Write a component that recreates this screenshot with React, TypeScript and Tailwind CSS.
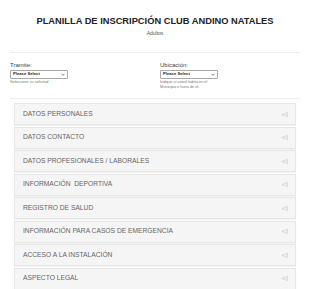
const sections = [
  'DATOS PERSONALES',
  'DATOS CONTACTO',
  'DATOS PROFESIONALES / LABORALES',
  'INFORMACIÓN  DEPORTIVA',
  'REGISTRO DE SALUD',
  'INFORMACIÓN PARA CASOS DE EMERGENCIA',
  'ACCESO A LA INSTALACIÓN',
  'ASPECTO LEGAL',
];

function FakeSelect() {
  return (
    <div className="flex items-center justify-between w-[58px] h-[9px] border border-[#a9a9a9] rounded-[1px] bg-white px-[2px]">
      <span className="text-[4.2px] font-bold text-[#222] leading-none">Please Select</span>
      <svg viewBox="0 0 10 6" className="w-[4px] h-[3px]">
        <path d="M1 1l4 4 4-4" fill="none" stroke="#333" strokeWidth="1.6" />
      </svg>
    </div>
  );
}

function Arrow() {
  return (
    <svg viewBox="0 0 8 6" className="w-[7px] h-[5px]">
      <path d="M7.5 0.5L0.8 3L7.5 5.5Z" fill="#f0f0f0" stroke="#c8c8c8" strokeWidth="0.7" strokeLinejoin="round" />
    </svg>
  );
}

export default function App() {
  return (
    <div className="w-[310px] h-[289px] bg-white overflow-hidden" style={{ fontFamily: '"Liberation Sans", Arial, sans-serif' }}>
      {/* Header */}
      <div className="pt-[15px] text-center">
        <h1 className="text-[9.3px] font-bold text-[#222] leading-[12px]">PLANILLA DE INSCRIPCIÓN CLUB ANDINO NATALES</h1>
        <p className="mt-[3px] text-[5px] text-[#555] leading-[6px]">Adultos</p>
      </div>

      <div className="mx-[10px] mt-[16px] border-t border-[#eeeeee]"></div>

      {/* Selects */}
      <div className="grid grid-cols-2 gap-[10px] px-[10px] pt-[9px] h-[45px]">
        <div>
          <div className="text-[6px] text-[#444] leading-[7px] mb-[1px]">Tramite:</div>
          <FakeSelect />
          <div className="mt-[1px] text-[3.8px] text-[#777] leading-[5px]">Seleccione su solicitud</div>
        </div>
        <div>
          <div className="text-[6px] text-[#444] leading-[7px] mb-[1px]">Ubicación:</div>
          <FakeSelect />
          <div className="mt-[1px] text-[3.8px] text-[#777] leading-[5px]">
            Indique si usted habita en el
            <br />
            Municipio o fuera de el.
          </div>
        </div>
      </div>

      <div className="mx-[10px] border-t border-[#eeeeee]"></div>

      {/* Accordion */}
      <div className="flex flex-col gap-[1.5px] px-[14px] pt-[4px]">
        {sections.map((s) => (
          <div
            key={s}
            className="flex items-center justify-between h-[22px] bg-[#f5f5f5] border border-[#e6e6e6] shadow-[0_1px_1px_rgba(0,0,0,0.05)] pl-[8px] pr-[7px]"
          >
            <span className="text-[6.7px] text-[#666] whitespace-pre">{s}</span>
            <Arrow />
          </div>
        ))}
      </div>
    </div>
  );
}
